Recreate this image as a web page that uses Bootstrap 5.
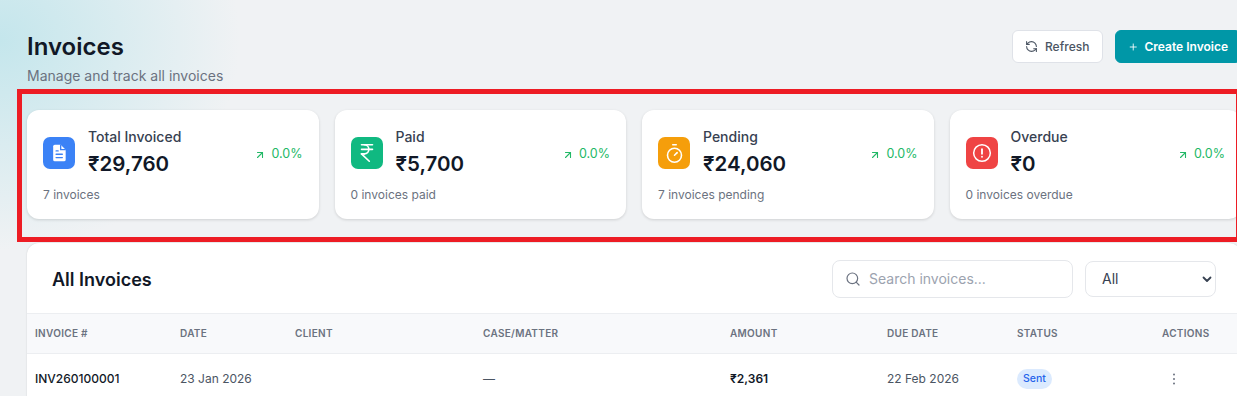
<!DOCTYPE html>
<html lang="en">
<head>
  <meta charset="UTF-8" />
  <meta name="viewport" content="width=device-width, initial-scale=1.0" />
  <title>Invoices</title>
  <link href="https://cdn.jsdelivr.net/npm/bootstrap@5.3.3/dist/css/bootstrap.min.css" rel="stylesheet" />
  <style>
    html, body { background: #fff; overflow: hidden; }
    body { font-family: Inter, "Noto Sans", sans-serif; color: #111827; }
    .page { height: 396px; overflow: hidden; padding: 30px 0 0 27px; position: relative;
      background: radial-gradient(ellipse 240px 210px at 0 40px, #c4e6ec 0%, rgba(196,230,236,0) 100%), #f0f2f4; }
    .content { width: 1214px; }
    .page-head { height: 80px; }
    .page-title { font-size: 24px; font-weight: 600; line-height: 34px; margin: 0; color: #111827; }
    .page-sub { font-size: 14px; color: #6b7280; line-height: 20px; margin-top: 2px; }
    .btn-refresh, .btn-create { height: 33px; font-size: 12px; font-weight: 500; border-radius: 6px; padding: 0 12px;
      display: flex; align-items: center; gap: 7px; white-space: nowrap; }
    .btn-refresh { width: 91px; background: #fff; color: #4b5563; border: 1px solid #dfe2e8; }
    .btn-create { width: 126px; background: #0097a7; color: #fff; border: 1px solid #0097a7; font-weight: 600; gap: 6px; }
    .stat-grid { display: grid; grid-template-columns: repeat(4, 291.5px); gap: 16px; }
    .stat-card { height: 109px; background: #fff; border-radius: 12px; padding: 16px; box-shadow: 0 1px 3px rgba(0,0,0,.14); }
    .stat-row { display: flex; gap: 13px; }
    .stat-icon { width: 32px; height: 32px; border-radius: 7px; flex: none; color: #fff; margin-top: 11px; }
    .stat-label { font-size: 14px; font-weight: 500; line-height: 22px; color: #374151; }
    .stat-value { font-size: 20.5px; font-weight: 600; line-height: 32px; color: #111827; }
    .stat-trend { font-size: 12.5px; color: #22b866; margin-top: 19px; gap: 5px; }
    .stat-sub { font-size: 12px; color: #6b7280; line-height: 18px; margin-top: 6px; }
    .bg-blue { background: #3b82f6; }
    .bg-green { background: #10b981; }
    .bg-amber { background: #f59e0b; }
    .bg-red { background: #ef4444; }
    .panel { margin-top: 24px; background: #fff; border-radius: 12px 12px 0 0; box-shadow: 0 0 2px rgba(0,0,0,.14); }
    .panel-head { height: 70px; padding: 2px 25px 0; }
    .panel-title { font-size: 18px; font-weight: 600; margin: 2px 0 0; color: #111827; }
    .search-box { width: 241px; height: 38px; border: 1px solid #e5e7eb; border-radius: 8px; padding: 0 12px; gap: 8px; }
    .search-box input { border: 0; outline: 0; font-size: 14px; width: 100%; padding: 0 0 2px; font-family: inherit; }
    .search-box input::placeholder { color: #9ca3af; }
    .status-select { width: 131px; height: 36px; font-size: 14px; color: #374151; border-color: #e5e7eb; border-radius: 8px;
      padding: 0 16px 2px; background-size: 10px 10px; background-position: right 3px center;
      background-image: url("data:image/svg+xml,%3csvg xmlns='http://www.w3.org/2000/svg' viewBox='0 0 10 10'%3e%3cpath fill='none' stroke='%23374151' stroke-width='1.8' stroke-linecap='round' stroke-linejoin='round' d='M1.5 3.5 5 7l3.5-3.5'/%3e%3c/svg%3e"); }
    .inv-table { table-layout: fixed; width: 100%; margin: 0; }
    .inv-table th { font-size: 10px; font-weight: 600; letter-spacing: .3px; text-transform: uppercase; color: #6b7280;
      background: #f8f9fb; height: 40px; padding: 0 8px; vertical-align: middle;
      border-top: 1px solid #eceef1; border-bottom: 1px solid #eceef1; }
    .inv-table td { font-size: 12px; color: #4b5563; height: 48px; padding: 2px 8px 0; vertical-align: middle; border: 0; }
    .inv-table .strong { font-weight: 500; color: #111827; }
    .inv-table .amount { font-weight: 600; color: #111827; }
    .c1 { width: 145px; } .c2 { width: 115px; } .c3 { width: 188px; } .c4 { width: 247px; }
    .c5 { width: 157px; } .c6 { width: 130px; } .c7 { width: 145px; }
    .badge-sent { display: inline-block; background: #dbeafe; color: #2563eb; font-size: 10.5px; font-weight: 500;
      line-height: 20px; padding: 0 6px; border-radius: 10px; }
    .kebab { margin-left: 4px; color: #6b7280; display: block; }
    .callout { position: absolute; left: 17px; top: 89px; width: 1220px; height: 153px; border: 5px solid #ed1c24;
      border-right-width: 1px; pointer-events: none; }
  </style>
</head>
<body>
  <div class="page">
    <div class="content">

      <div class="page-head d-flex justify-content-between align-items-start">
        <div>
          <h1 class="page-title">Invoices</h1>
          <div class="page-sub">Manage and track all invoices</div>
        </div>
        <div class="d-flex gap-2">
          <button type="button" class="btn btn-refresh me-1">
            <svg width="13" height="13" viewBox="0 0 24 24" fill="none" stroke="currentColor" stroke-width="2" stroke-linecap="round" stroke-linejoin="round"><path d="M21 12a9 9 0 0 0-9-9 9.75 9.75 0 0 0-6.74 2.74L3 8"/><path d="M3 3v5h5"/><path d="M3 12a9 9 0 0 0 9 9 9.75 9.75 0 0 0 6.74-2.74L21 16"/><path d="M16 16h5v5"/></svg>
            Refresh
          </button>
          <button type="button" class="btn btn-create">
            <svg width="14" height="14" viewBox="0 0 24 24" fill="none" stroke="currentColor" stroke-width="2" stroke-linecap="round"><path d="M5 12h14"/><path d="M12 5v14"/></svg>
            Create Invoice
          </button>
        </div>
      </div>

      <div class="stat-grid">
        <div class="stat-card">
          <div class="stat-row">
            <div class="stat-icon bg-blue d-flex align-items-center justify-content-center">
              <svg width="20" height="20" viewBox="0 0 24 24"><path fill="#fff" d="M7 2h7l6 6v12a2 2 0 0 1-2 2H7a2 2 0 0 1-2-2V4a2 2 0 0 1 2-2z"/><path fill="none" stroke="#3b82f6" stroke-width="1.6" stroke-linecap="round" d="M14 2.5V8h5.5M8.5 9.5h2.5M8.5 13.5h7.5M8.5 17.5h7.5"/></svg>
            </div>
            <div>
              <div class="stat-label">Total Invoiced</div>
              <div class="stat-value">₹29,760</div>
            </div>
            <div class="stat-trend d-flex align-items-start ms-auto">
              <svg class="mt-1" width="12" height="12" viewBox="0 0 24 24" fill="none" stroke="currentColor" stroke-width="2.2" stroke-linecap="round" stroke-linejoin="round"><path d="M7 7h10v10"/><path d="M7 17 17 7"/></svg>
              0.0%
            </div>
          </div>
          <div class="stat-sub">7 invoices</div>
        </div>

        <div class="stat-card">
          <div class="stat-row">
            <div class="stat-icon bg-green d-flex align-items-center justify-content-center">
              <svg width="22" height="22" viewBox="0 0 24 24" fill="none" stroke="#fff" stroke-width="1.8" stroke-linecap="round" stroke-linejoin="round"><path d="M6 3h12"/><path d="M6 8h12"/><path d="m6 13 8.5 8"/><path d="M6 13h3"/><path d="M9 13c6.667 0 6.667-10 0-10"/></svg>
            </div>
            <div>
              <div class="stat-label">Paid</div>
              <div class="stat-value">₹5,700</div>
            </div>
            <div class="stat-trend d-flex align-items-start ms-auto">
              <svg class="mt-1" width="12" height="12" viewBox="0 0 24 24" fill="none" stroke="currentColor" stroke-width="2.2" stroke-linecap="round" stroke-linejoin="round"><path d="M7 7h10v10"/><path d="M7 17 17 7"/></svg>
              0.0%
            </div>
          </div>
          <div class="stat-sub">0 invoices paid</div>
        </div>

        <div class="stat-card">
          <div class="stat-row">
            <div class="stat-icon bg-amber d-flex align-items-center justify-content-center">
              <svg width="21" height="21" viewBox="0 0 24 24" fill="none" stroke="#fff" stroke-width="1.8" stroke-linecap="round" stroke-linejoin="round"><path d="M10 2h4"/><path d="m12 14 3-3"/><circle cx="12" cy="14" r="8"/></svg>
            </div>
            <div>
              <div class="stat-label">Pending</div>
              <div class="stat-value">₹24,060</div>
            </div>
            <div class="stat-trend d-flex align-items-start ms-auto">
              <svg class="mt-1" width="12" height="12" viewBox="0 0 24 24" fill="none" stroke="currentColor" stroke-width="2.2" stroke-linecap="round" stroke-linejoin="round"><path d="M7 7h10v10"/><path d="M7 17 17 7"/></svg>
              0.0%
            </div>
          </div>
          <div class="stat-sub">7 invoices pending</div>
        </div>

        <div class="stat-card">
          <div class="stat-row">
            <div class="stat-icon bg-red d-flex align-items-center justify-content-center">
              <svg width="20" height="20" viewBox="0 0 24 24" fill="none" stroke="#fff" stroke-width="1.8" stroke-linecap="round"><circle cx="12" cy="12" r="10"/><path d="M12 7.5v5.5" stroke-width="2.2"/><path d="M12 16.5h.01" stroke-width="2.2"/></svg>
            </div>
            <div>
              <div class="stat-label">Overdue</div>
              <div class="stat-value">₹0</div>
            </div>
            <div class="stat-trend d-flex align-items-start ms-auto">
              <svg class="mt-1" width="12" height="12" viewBox="0 0 24 24" fill="none" stroke="currentColor" stroke-width="2.2" stroke-linecap="round" stroke-linejoin="round"><path d="M7 7h10v10"/><path d="M7 17 17 7"/></svg>
              0.0%
            </div>
          </div>
          <div class="stat-sub">0 invoices overdue</div>
        </div>
      </div>

      <div class="panel">
        <div class="panel-head d-flex align-items-center justify-content-between">
          <h2 class="panel-title">All Invoices</h2>
          <div class="d-flex align-items-center gap-2">
            <div class="search-box d-flex align-items-center me-1">
              <svg class="flex-shrink-0" width="16" height="16" viewBox="0 0 24 24" fill="none" stroke="#6b7280" stroke-width="1.8" stroke-linecap="round"><circle cx="11" cy="11" r="8"/><path d="m21 21-4.3-4.3"/></svg>
              <input type="text" placeholder="Search invoices..." />
            </div>
            <select class="form-select status-select"><option>All</option></select>
          </div>
        </div>
        <table class="table inv-table">
          <thead>
            <tr>
              <th class="c1">Invoice #</th><th class="c2">Date</th><th class="c3">Client</th><th class="c4">Case/Matter</th>
              <th class="c5">Amount</th><th class="c6">Due Date</th><th class="c7">Status</th><th>Actions</th>
            </tr>
          </thead>
          <tbody>
            <tr>
              <td class="strong">INV260100001</td>
              <td>23 Jan 2026</td>
              <td></td>
              <td>—</td>
              <td class="amount">₹2,361</td>
              <td>22 Feb 2026</td>
              <td><span class="badge-sent">Sent</span></td>
              <td>
                <svg class="kebab" width="16" height="16" viewBox="0 0 16 16" fill="currentColor"><circle cx="8" cy="3.5" r="1"/><circle cx="8" cy="8" r="1"/><circle cx="8" cy="12.5" r="1"/></svg>
              </td>
            </tr>
          </tbody>
        </table>
      </div>

    </div>
    <div class="callout"></div>
  </div>
  <script src="https://cdn.jsdelivr.net/npm/bootstrap@5.3.3/dist/js/bootstrap.bundle.min.js"></script>
</body>
</html>
